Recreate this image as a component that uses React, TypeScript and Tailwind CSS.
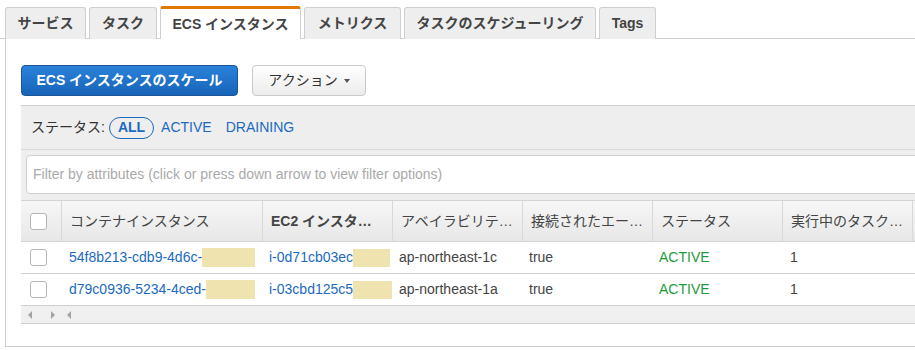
import React from 'react'

const TABS = [
  { label: 'サービス', w: 'w-[81px]' },
  { label: 'タスク', w: 'w-[68px]' },
  { label: 'ECS インスタンス', w: 'w-[141px]', active: true },
  { label: 'メトリクス', w: 'w-[97px]' },
  { label: 'タスクのスケジューリング', w: 'w-[192px]' },
  { label: 'Tags', w: 'w-[57px]' },
]

const COLS = [
  { label: 'コンテナインスタンス', w: 'w-[201px]' },
  { label: 'EC2 インスタ…', w: 'w-[130px]', bold: true },
  { label: 'アベイラビリテ…', w: 'w-[130px]' },
  { label: '接続されたエー…', w: 'w-[130px]' },
  { label: 'ステータス', w: 'w-[130px]' },
  { label: '実行中のタスク…', w: 'w-[130px]' },
]

const ROWS = [
  { id: '54f8b213-cdb9-4d6c-', idMask: 'w-[53px]', ec2: 'i-0d71cb03ec', ec2Mask: 'w-[37px]', az: 'ap-northeast-1c' },
  { id: 'd79c0936-5234-4ced-', idMask: 'w-[49px]', ec2: 'i-03cbd125c5', ec2Mask: 'w-[39px]', az: 'ap-northeast-1a' },
]

function Checkbox() {
  return <div className="w-[17px] h-[17px] shrink-0 bg-white border border-[#b5b5b5] rounded-[3px]" />
}

export default function App() {
  return (
    <div className="w-[915px] h-[350px] overflow-hidden bg-white text-[#444] font-['Liberation_Sans','Noto_Sans_CJK_JP',sans-serif]">
      {/* tabs */}
      <div className="flex items-end gap-[3px] pl-[5px] pt-[6px] h-[39px] border-b border-[#cfcfcf]">
        {TABS.map((t) => (
          <div
            key={t.label}
            className={`${t.w} -mb-px flex items-center justify-center text-[14px] font-bold rounded-t-[3px] border border-b-0 whitespace-nowrap ${
              t.active
                ? 'bg-white border-[#cfcfcf] border-t-[3px] border-t-[#e07700] h-[33px] text-[#444]'
                : 'bg-[#eeeeee] border-[#cfcfcf] h-[32px] border-b border-b-[#cfcfcf]'
            }`}
          >
            {t.label}
          </div>
        ))}
      </div>

      {/* panel */}
      <div className="ml-[5px] w-[960px] h-[308px] border-l border-b border-[#cfcfcf] pl-[15px] pt-[26px]">
        <div className="flex items-center gap-[14px]">
          <button className="w-[217px] h-[31px] rounded-[4px] border border-[#1a5597] bg-gradient-to-b from-[#2a82da] to-[#1764b8] text-white text-[14px] font-bold">
            ECS インスタンスのスケール
          </button>
          <button className="w-[114px] h-[31px] rounded-[4px] border border-[#c9c9c9] bg-gradient-to-b from-[#ffffff] to-[#ececec] text-[#333] text-[14px] flex items-center justify-center gap-[6px]">
            アクション
            <span className="w-0 h-0 border-l-[3.5px] border-r-[3.5px] border-t-[4px] border-l-transparent border-r-transparent border-t-[#555]" />
          </button>
        </div>

        <div className="mt-[9px] bg-[#eeeeee] border-t border-[#cfcfcf]">
          {/* status filter */}
          <div className="h-[44px] flex items-center pl-[10px] text-[14px] border-b border-[#d9d9d9]">
            <span className="text-[#333]">ステータス:</span>
            <span className="ml-[4px] px-[8px] h-[22px] flex items-center rounded-full border-[1.5px] border-[#1b6ac0] text-[#1b6ac0] font-bold">
              ALL
            </span>
            <span className="ml-[7px] text-[#1b6ac0]">ACTIVE</span>
            <span className="ml-[14px] text-[#1b6ac0]">DRAINING</span>
          </div>

          {/* attribute filter */}
          <div className="pt-[5px] pb-[6px] pl-[5px]">
            <div className="h-[39px] bg-white border border-[#cfcfcf] rounded-l-[4px] flex items-center pl-[6px] text-[14px] text-[#aaaaaa] whitespace-nowrap">
              Filter by attributes (click or press down arrow to view filter options)
            </div>
          </div>

          {/* header */}
          <div className="flex h-[42px] bg-gradient-to-b from-[#f7f7f7] to-[#e7e7e7] border-t border-b border-[#d4d4d4] text-[14px] text-[#444]">
            <div className="w-[40px] flex items-center pl-[9px]">
              <Checkbox />
            </div>
            {COLS.map((c) => (
              <div
                key={c.label}
                className={`${c.w} flex items-center pl-[8px] border-l border-[#d8d8d8] whitespace-nowrap ${c.bold ? 'font-bold' : ''}`}
              >
                {c.label}
              </div>
            ))}
            <div className="flex-1 border-l border-[#d8d8d8]" />
          </div>

          {/* rows */}
          {ROWS.map((r) => (
            <div key={r.id} className="flex h-[32px] bg-white border-b border-[#d0d0d0] text-[14px] whitespace-nowrap">
              <div className="w-[40px] flex items-center pl-[9px]">
                <Checkbox />
              </div>
              <div className="w-[201px] flex items-center pl-[8px] text-[#1b6ac0]">
                {r.id}
                <span className={`${r.idMask} shrink-0 h-[19px] bg-[#efe4b0]`} />
              </div>
              <div className="w-[130px] flex items-center pl-[7px] text-[#1b6ac0]">
                {r.ec2}
                <span className={`${r.ec2Mask} shrink-0 h-[18px] bg-[#efe4b0]`} />
              </div>
              <div className="w-[130px] flex items-center pl-[7px]">{r.az}</div>
              <div className="w-[130px] flex items-center pl-[7px]">true</div>
              <div className="w-[130px] flex items-center pl-[7px] text-[#1d9a3c]">ACTIVE</div>
              <div className="w-[130px] flex items-center pl-[8px]">1</div>
            </div>
          ))}

          {/* horizontal scrollbar */}
          <div className="h-[18px] bg-[#f0f0f0] border-b border-[#cfcfcf] flex items-center pl-[7px] gap-[19px]">
            <span className="w-0 h-0 border-t-[4px] border-b-[4px] border-r-[4px] border-t-transparent border-b-transparent border-r-[#a3a3a3]" />
            <div className="flex items-center gap-[12px]">
              <span className="w-0 h-0 border-t-[4px] border-b-[4px] border-l-[4px] border-t-transparent border-b-transparent border-l-[#a3a3a3]" />
              <span className="w-0 h-0 border-t-[4px] border-b-[4px] border-r-[4px] border-t-transparent border-b-transparent border-r-[#a3a3a3]" />
            </div>
          </div>
        </div>
      </div>
    </div>
  )
}
